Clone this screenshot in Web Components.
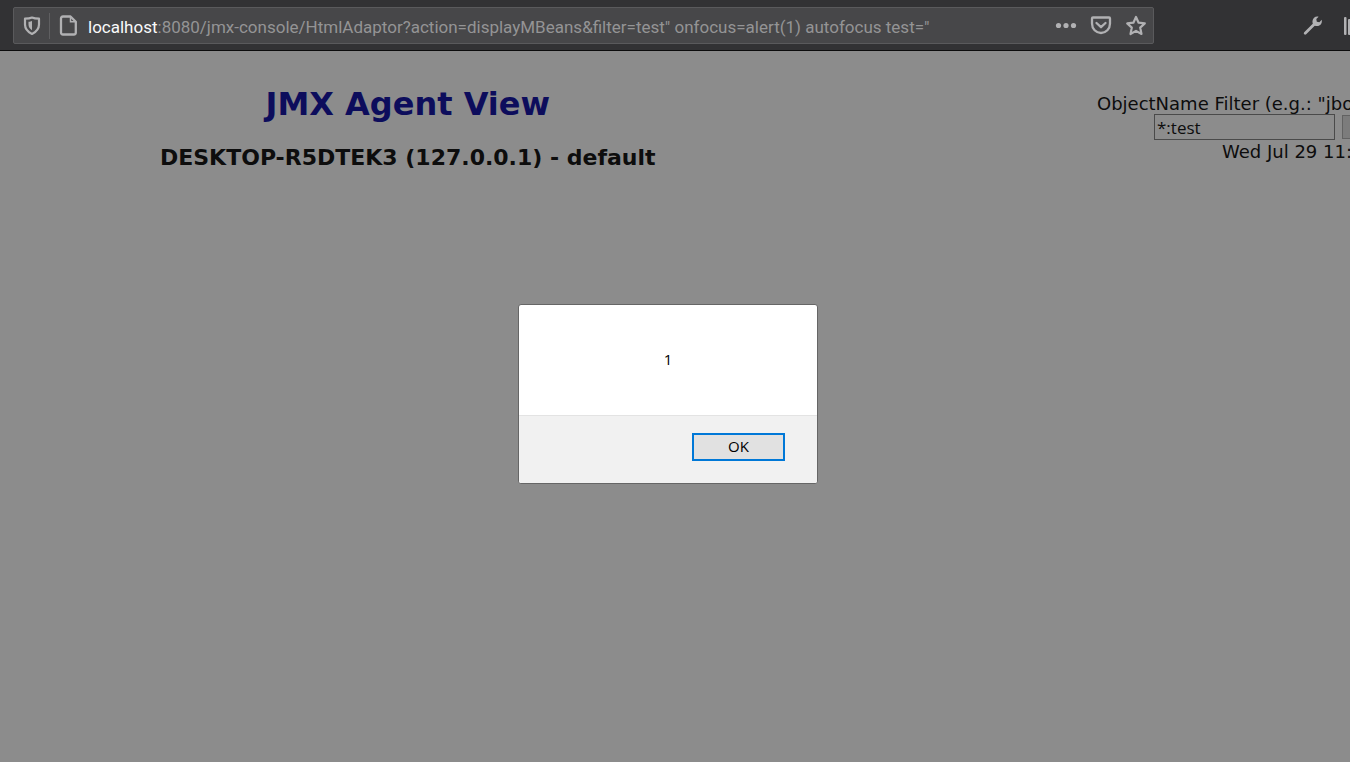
<!DOCTYPE html>
<html lang="en">
<head>
<meta charset="utf-8">
<title>JBoss JMX Management Console</title>
<style>
html, body { margin: 0; height: 100%; }
body { background: #8c8c8c; font-family: "DejaVu Sans", Verdana, sans-serif; overflow: hidden; }
</style>
</head>
<body>
<browser-window>
  <browser-bar slot="bar" host="localhost" path=':8080/jmx-console/HtmlAdaptor?action=displayMBeans&amp;filter=test" onfocus=alert(1) autofocus test="'></browser-bar>
  <agent-header>
    <span slot="title">JMX Agent View</span>
    <span slot="server">DESKTOP-R5DTEK3 (127.0.0.1) - default</span>
    <filter-form slot="filter" value="*:test">
      <span slot="label">ObjectName Filter (e.g.: "jbo</span>
      <span slot="date">Wed Jul 29 11:</span>
    </filter-form>
  </agent-header>
  <alert-dialog slot="dialog">1</alert-dialog>
</browser-window>
<script>
class BaseElement extends HTMLElement {
  constructor() {
    super();
    this.attachShadow({ mode: "open" }).innerHTML = this.constructor.markup;
  }
}

customElements.define("browser-window", class extends BaseElement {
  static markup = `<style>
    :host { display: flex; flex-direction: column; height: 100%; }
    main { flex: 1; display: grid; min-height: 0; overflow: hidden; }
    .page, .layer { grid-area: 1 / 1; min-width: 0; }
    .layer { display: grid; place-items: center; padding: 0 14px 26px 0; }
  </style>
  <slot name="bar"></slot>
  <main><div class="page"><slot></slot></div><div class="layer"><slot name="dialog"></slot></div></main>`;
});

customElements.define("browser-bar", class extends BaseElement {
  static markup = `<style>
    :host { display: flex; box-sizing: border-box; height: 51px; padding: 7px 0 6px 13px;
      background: #323234; border-bottom: 1px solid #0c0c0d; overflow: hidden; color: #b1b1b3; }
    .field { flex: 1; display: flex; align-items: center; box-sizing: border-box; min-width: 0;
      border: 1px solid #5a5a5c; border-radius: 2px; background: #474749; }
    button { flex: none; display: block; padding: 0 0 2px; border: 0; background: none; color: inherit; }
    svg { display: block; }
    .shield { margin-left: 8px; }
    .line { width: 1px; height: 26px; margin: 0 8px 0 7px; background: #5f5f61; }
    .url { flex: 1; min-width: 0; margin-left: 10px; padding-top: 2px; outline: 0; font: 17px/24px Roboto, "Segoe UI", sans-serif;
      white-space: pre; overflow: hidden; color: #949495; }
    .host { color: #f9f9fa; }
    .actions { display: flex; gap: 13px; margin-right: 6px; }
    .tools { display: flex; flex: none; align-items: center; gap: 18px; width: 48px; margin-left: 148px; }
  </style>
  <div class="field">
    <button class="shield" aria-label="Tracking protection"><svg width="20" height="22" viewBox="0 0 20 22">
      <path d="M10 3.500C8 4.500 5.500 4.700 3 4.700V10.500C3 15 6 18 10 20C14 18 17 15 17 10.500V4.700C14.500 4.700 12 4.500 10 3.500Z" fill="none" stroke="currentColor" stroke-width="2.200" stroke-linejoin="round"/>
      <path d="M10 7C9 7.500 8 7.700 6.500 7.800V10.500C6.500 13 7.700 14.800 10 16.200Z" fill="currentColor"/></svg></button>
    <span class="line"></span>
    <button aria-label="Page information"><svg width="20" height="22" viewBox="0 0 20 22">
      <path d="M5 2.500H12.500L17.800 7.800V18.500Q17.800 20.500 15.800 20.500H5Q3 20.500 3 18.500V4.500Q3 2.500 5 2.500Z" fill="none" stroke="currentColor" stroke-width="2.300" stroke-linejoin="round"/>
      <path d="M12.500 2.500V7.800H17.800" fill="none" stroke="currentColor" stroke-width="1.500"/></svg></button>
    <div class="url" role="textbox" aria-label="Address" contenteditable="true" spellcheck="false"><span class="host"></span><span class="path"></span></div>
    <div class="actions">
      <button aria-label="Page actions"><svg width="22" height="22" viewBox="0 0 22 22" fill="currentColor"><circle cx="3.500" cy="11.500" r="2.600"/><circle cx="11" cy="11.500" r="2.600"/><circle cx="18.500" cy="11.500" r="2.600"/></svg></button>
      <button aria-label="Save to Pocket"><svg width="22" height="22" viewBox="0 0 22 22" fill="none" stroke="currentColor" stroke-linecap="round" stroke-linejoin="round">
        <path d="M3 3.500H19Q20 3.500 20 4.500V9.500C20 15 16 19 11 19S2 15 2 9.500V4.500Q2 3.500 3 3.500Z" stroke-width="2.300"/><path d="M6.500 9L11 13.200L15.500 9" stroke-width="2.300"/></svg></button>
      <button aria-label="Bookmark this page"><svg width="22" height="22" viewBox="0 0 22 22">
        <path d="M11 3L13.600 8.700L19.800 9.400L15.200 13.600L16.500 20L11 16.900L5.500 20L6.800 13.600L2.200 9.400L8.400 8.700Z" fill="none" stroke="currentColor" stroke-width="2.200" stroke-linejoin="round"/></svg></button>
    </div>
  </div>
  <div class="tools">
    <button aria-label="Developer tools"><svg width="22" height="22" viewBox="0 0 22 22">
      <path d="M3.200 19.300L12.500 10" stroke="currentColor" stroke-width="2.800" stroke-linecap="round"/>
      <path d="M16.600 2.700L14.300 5.100L14.800 7.700L17.400 8.200L19.700 5.800C20.500 9.100 18.400 12.100 15.100 12.100C11.900 12.100 10.200 9.800 10.500 6.900C10.800 3.800 13.800 1.700 16.600 2.700Z" fill="currentColor"/></svg></button>
    <button aria-label="Library"><svg width="22" height="22" viewBox="0 0 22 22" fill="currentColor"><rect x="2" y="3" width="2.500" height="18" rx="1"/><rect x="6" y="5" width="3" height="16" rx="1"/><rect x="10" y="6" width="3" height="15" rx="1"/></svg></button>
  </div>`;
  connectedCallback() {
    this.shadowRoot.querySelector(".host").textContent = this.getAttribute("host");
    this.shadowRoot.querySelector(".path").textContent = this.getAttribute("path");
  }
});

customElements.define("agent-header", class extends BaseElement {
  static markup = `<style>
    :host { display: flex; padding: 33px 0 0 4px; color: #0d0d0d; }
    .titles { flex: 0 0 60%; text-align: center; white-space: nowrap; }
    h1, h2 { margin: 0; font-family: "DejaVu Sans", Verdana, sans-serif; font-weight: bold; }
    h1 { font-size: 32px; line-height: 40px; color: #0d0d5c; }
    h2 { margin-top: 20px; font-size: 22px; line-height: 28px; }
    .filter { flex: none; width: 253px; margin-left: auto; padding-top: 8px; }
  </style>
  <div class="titles"><h1><slot name="title"></slot></h1><h2><slot name="server"></slot></h2></div>
  <div class="filter"><slot name="filter"></slot></div>`;
});

customElements.define("filter-form", class extends BaseElement {
  static markup = `<style>
    :host { display: block; font-size: 18px; white-space: nowrap; overflow: hidden; }
    form { margin: 0; }
    label { display: block; padding-top: 2px; line-height: 20px; }
    .row { display: flex; align-items: center; gap: 7px; padding-left: 57px; }
    input { flex: none; box-sizing: border-box; width: 181px; height: 26px; padding: 0 2px; border: 1px solid #4a4a4a; border-radius: 0;
      background: #8c8c8c; color: #0d0d0d; outline: 0; font: 17px "Open Sans", "Segoe UI", sans-serif; }
    button { flex: none; box-sizing: border-box; width: 80px; height: 24px; padding: 0; border: 1px solid #626262; background: #7c7c7c; }
    .date { padding-left: 125px; line-height: 24px; }
  </style>
  <form>
    <label for="filter"><slot name="label"></slot></label>
    <div class="row"><input id="filter" type="text"><button type="button" aria-label="Apply filter"></button></div>
    <div class="date"><slot name="date"></slot></div>
  </form>`;
  connectedCallback() {
    this.shadowRoot.querySelector("input").value = this.getAttribute("value");
  }
});

customElements.define("alert-dialog", class extends BaseElement {
  static markup = `<style>
    :host { display: block; color: #000; font-family: "Open Sans", "Segoe UI", sans-serif; }
    section { box-sizing: border-box; width: 300px; border: 1px solid #666; border-radius: 3px; background: #fff; overflow: hidden; }
    p { margin: 0; padding: 44px 0 46px; text-align: center; font-size: 15px; line-height: 20px; }
    footer { display: flex; justify-content: flex-end; padding: 17px 32px 22px; border-top: 1px solid #e3e3e3; background: #f1f1f1; }
    button { width: 93px; height: 28px; padding: 0 0 2px; border: 2px solid #0078d7; border-radius: 0; background: #e1e1e1; color: #000;
      font: 15px "Open Sans", "Segoe UI", sans-serif; }
  </style>
  <section role="alertdialog" aria-modal="true"><p><slot></slot></p><footer><button type="button">OK</button></footer></section>`;
});
</script>
</body>
</html>
